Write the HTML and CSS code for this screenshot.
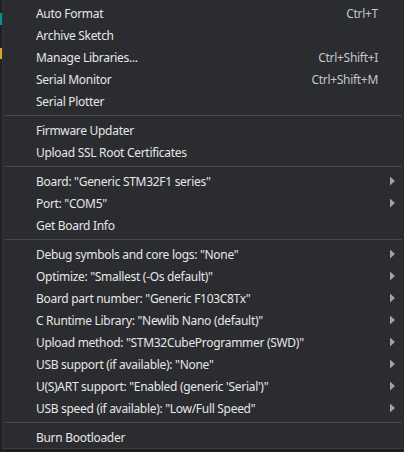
FILE: index.html
```html
<!DOCTYPE html>
<html>
<head>
<meta charset="utf-8">
<link rel="stylesheet" href="styles.css">
</head>
<body>
<div class="screen">
  <div class="gutter">
    <span class="mark teal"></span>
    <span class="mark yellow"></span>
  </div>
  <div class="menu">
    <div class="row"><span class="label">Auto Format</span><span class="key">Ctrl+T</span><span class="arrow"></span></div>
    <div class="row"><span class="label">Archive Sketch</span><span class="key"></span><span class="arrow"></span></div>
    <div class="row"><span class="label">Manage Libraries...</span><span class="key">Ctrl+Shift+I</span><span class="arrow"></span></div>
    <div class="row"><span class="label">Serial Monitor</span><span class="key">Ctrl+Shift+M</span><span class="arrow"></span></div>
    <div class="row"><span class="label">Serial Plotter</span><span class="key"></span><span class="arrow"></span></div>
    <div class="sep"></div>
    <div class="row"><span class="label">Firmware Updater</span><span class="key"></span><span class="arrow"></span></div>
    <div class="row"><span class="label">Upload SSL Root Certificates</span><span class="key"></span><span class="arrow"></span></div>
    <div class="sep"></div>
    <div class="row"><span class="label">Board: "Generic STM32F1 series"</span><span class="key"></span><span class="arrow sub"></span></div>
    <div class="row"><span class="label">Port: "COM5"</span><span class="key"></span><span class="arrow sub"></span></div>
    <div class="row"><span class="label">Get Board Info</span><span class="key"></span><span class="arrow"></span></div>
    <div class="sep"></div>
    <div class="row"><span class="label">Debug symbols and core logs: "None"</span><span class="key"></span><span class="arrow sub"></span></div>
    <div class="row"><span class="label">Optimize: "Smallest (-Os default)"</span><span class="key"></span><span class="arrow sub"></span></div>
    <div class="row"><span class="label">Board part number: "Generic F103C8Tx"</span><span class="key"></span><span class="arrow sub"></span></div>
    <div class="row"><span class="label">C Runtime Library: "Newlib Nano (default)"</span><span class="key"></span><span class="arrow sub"></span></div>
    <div class="row"><span class="label">Upload method: "STM32CubeProgrammer (SWD)"</span><span class="key"></span><span class="arrow sub"></span></div>
    <div class="row"><span class="label">USB support (if available): "None"</span><span class="key"></span><span class="arrow sub"></span></div>
    <div class="row"><span class="label">U(S)ART support: "Enabled (generic 'Serial')"</span><span class="key"></span><span class="arrow sub"></span></div>
    <div class="row"><span class="label">USB speed (if available): "Low/Full Speed"</span><span class="key"></span><span class="arrow sub"></span></div>
    <div class="sep"></div>
    <div class="row"><span class="label">Burn Bootloader</span><span class="key"></span><span class="arrow"></span></div>
  </div>
</div>
</body>
</html>
```

FILE: styles.css
```css
html, body {
  margin: 0;
  padding: 0;
  background: #1f2023;
}
.screen {
  display: flex;
  width: 404px;
  height: 452px;
  overflow: hidden;
  font-family: "Noto Sans", "Open Sans", sans-serif;
  font-size: 12px;
  letter-spacing: -0.3px;
}
.gutter {
  width: 2px;
  flex: none;
  display: flex;
  flex-direction: column;
  background: #1f2023;
}
.mark {
  display: block;
  width: 2px;
}
.mark.teal {
  margin-top: 13px;
  height: 12px;
  background: #0b8f8e;
}
.mark.yellow {
  margin-top: 23px;
  height: 11px;
  background: #d8a628;
}
.menu {
  flex: 1;
  height: 449px;
  box-sizing: border-box;
  background: #2b2c30;
  border-left: 1px solid #323337;
  border-bottom: 1px solid #3a3b3f;
  padding-top: 2px;
  display: flex;
  flex-direction: column;
}
.row {
  display: flex;
  align-items: center;
  height: 22px;
  flex: none;
  padding-left: 33px;
  color: #e6e6e6;
  white-space: nowrap;
}
.label {
  flex: 1;
}
.key {
  color: #c3c7cc;
  margin-right: 12px;
}
.arrow {
  width: 5px;
  height: 9px;
  margin-right: 9px;
  flex: none;
}
.arrow.sub {
  background: #a2a3a6;
  clip-path: polygon(0 0, 100% 50%, 0 100%);
}
.sep {
  flex: none;
  height: 1px;
  margin: 3px 2px 3px 2px;
  background: #46474b;
}
```
